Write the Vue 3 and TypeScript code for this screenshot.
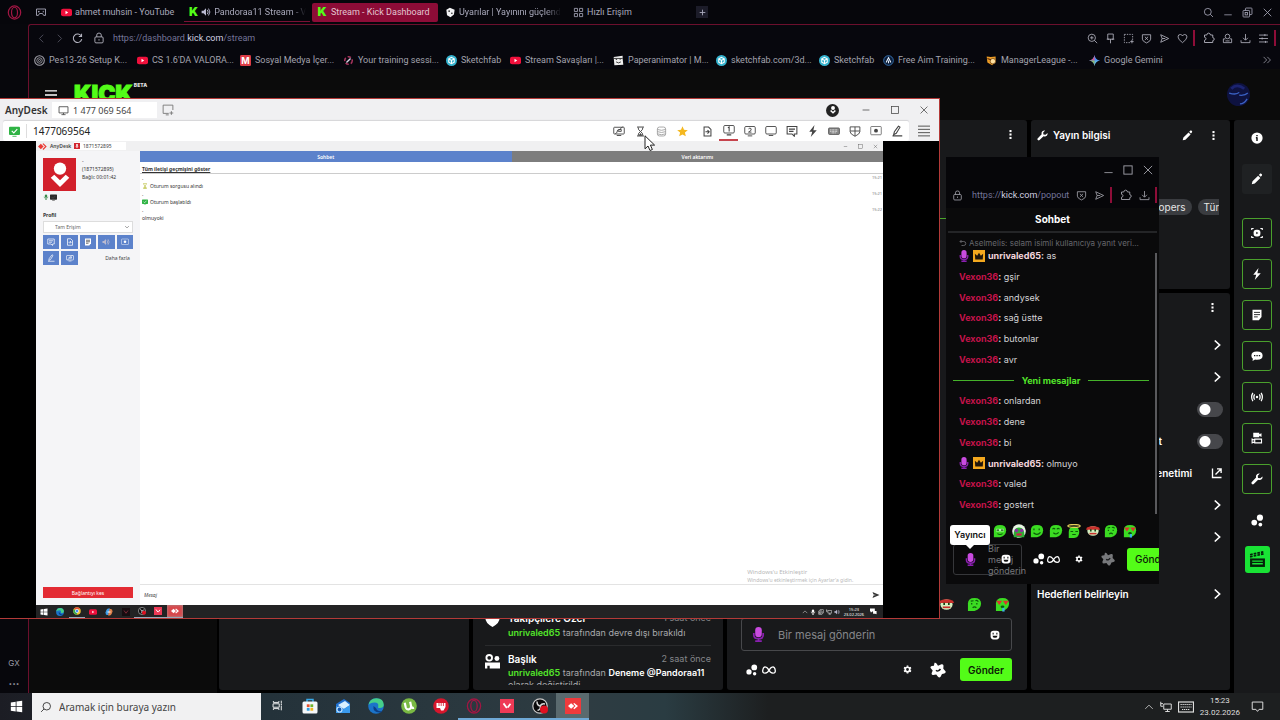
<script setup lang="ts">
import { h } from 'vue'
import type { FunctionalComponent } from 'vue'

const F = 'fill="currentColor" stroke="none"'

const glyphs: Record<string, string> = {
  opera: '<ellipse cx="8" cy="8" rx="6.6" ry="7" stroke-width="1.3"/><ellipse cx="8" cy="8" rx="3.2" ry="5.6" stroke-width="1.3"/>',
  gamepad: '<path d="M2 4h12v8.500h-2.500L10 10H6l-1.500 2.500H2z"/><path d="M5 6.500v2M11 6.500v2M4 7.500h2"/>',
  youtube: '<rect x="0" y="2.500" width="16" height="11" rx="3" fill="#f0103c" stroke="none"/><path d="M6.500 5.500l4 2.500-4 2.500z" fill="#fff" stroke="none"/>',
  speaker: '<path d="M1 6h3l4-4v12l-4-4H1z" fill="#b9b9d0" stroke="none"/><path d="M10 4.500q3 3.500 0 7M12 2.500q4.500 5.500 0 11" stroke="#b9b9d0" stroke-width="1.500"/>',
  dice: '<path d="M2 4l5-3 7 3-1 7-5 4-5-3z" fill="#f2f2f4" stroke="none"/><circle cx="6" cy="6" r="1.100" fill="#111" stroke="none"/><circle cx="10" cy="9" r="1.100" fill="#111" stroke="none"/>',
  grid: '<path d="M2 2h4.500v4.500H2zM9.500 2H14v4.500H9.500zM2 9.500h4.500V14H2zM9.500 9.500H14V14H9.500z"/>',
  plus: '<path d="M8 3v10M3 8h10" stroke-width="1.600"/>',
  search: '<circle cx="7" cy="7" r="5"/><path d="M10.600 10.600L14.500 14.500"/>',
  min: '<path d="M2 12.500h12"/>',
  dash: '<path d="M2.500 8h11"/>',
  restore: '<path d="M5 5V2.500q0-1 1-1h7.500q1 0 1 1V10q0 1-1 1H11"/><rect x="1.500" y="5" width="9.500" height="9.500" rx="1"/><rect x="4.500" y="8" width="3.500" height="3.500"/>',
  max: '<rect x="2.500" y="2.500" width="11" height="11"/>',
  close: '<path d="M2.500 2.500l11 11M13.500 2.500l-11 11"/>',
  back: '<path d="M10.500 2.500L5 8l5.500 5.500"/>',
  fwd: '<path d="M5.500 2.500L11 8l-5.500 5.500"/>',
  chev: '<path d="M5 2l6.500 6L5 14" stroke-width="2.200"/>',
  down: '<path d="M3 5.500L8 10.500l5-5"/>',
  up: '<path d="M2 11L8 5l6 6"/>',
  reload: '<path d="M13.500 4.500A6.200 6.200 0 1 0 14.200 9M13.900 1v4h-4" stroke-width="1.500"/>',
  lock: '<rect x="2.500" y="6.500" width="11" height="8" rx="1.500"/><path d="M5 6.500V4q0-2.600 3-2.600T11 4v2.500M8 9.500v2"/>',
  zoom: '<circle cx="7" cy="7" r="5.300"/><path d="M10.800 10.800l4 4M4.500 7h5M7 4.500v5"/>',
  pin: '<path d="M4 1.500h8v7.500H4zM2.500 9H6M10 9h3.500M8 9v6"/>',
  crop: '<path d="M2 2h12v9M2 2v12h9" stroke-dasharray="2 1.600"/><path d="M13 10v5M10.500 12.500h5"/>',
  shieldx: '<path d="M2 2.500h12V9q0 3-6 5.500Q2 12 2 9z"/><path d="M5.700 5.500l4.600 4.600M10.300 5.500L5.700 10.100"/>',
  send: '<path d="M2.500 2.500L14 8 2.500 13.500 4.500 8zM4.500 8H9"/>',
  heart: '<path d="M8 14Q1.500 9.500 1.500 5.700T5 2.200Q7 2.200 8 4.300 9 2.200 11 2.200q3.500 0 3.500 3.500T8 14z"/>',
  heartf: `<path ${F} d="M8 15Q0 10 .5 5.500 1 1.500 4.700 1.500 7 1.500 8 4q1-2.500 3.300-2.500 3.700 0 4.200 4Q16 10 8 15z"/>`,
  puzzle: '<path d="M2 4h3q.3-2.500 2.500-2.500T10 4h3v3.500q2 .3 2 2t-2 2V14H2v-3q2-.3 2-2T2 7z"/>',
  person: '<circle cx="8" cy="5" r="3.300"/><path d="M5 8.500H2v5.500h12V8.500h-3M5 11.500h6"/>',
  download: '<path d="M8 1.500v8.500M4.500 7L8 10.500 11.500 7M1.500 10.500v3.500h13v-3.500"/>',
  sliders: '<path d="M1.500 3h13M1.500 8h13M1.500 13h13M10 1.500v3M6 6.500v3M11 11.500v3"/>',
  more: '<path d="M2.500 3L7.500 8l-5 5M8.500 3l5 5-5 5"/>',
  target: '<circle cx="8" cy="8" r="7" stroke-width="1.500"/><circle cx="8" cy="8" r="4"/><circle cx="8" cy="8" r="1.500"/>',
  medya: '<rect width="16" height="16" rx="2" fill="#dc3c46" stroke="none"/>',
  aim: '<circle cx="8" cy="8" r="5.500" stroke="#a8345e" stroke-width="2.200" stroke-dasharray="5 3"/><path d="M5 11l6-6" stroke="#d5d5e5" stroke-width="2"/>',
  sketch: '<circle cx="8" cy="8" r="8" fill="#35b3cf" stroke="none"/><path d="M8 3.500l4 2.200v4.600L8 12.500l-4-2.200V5.700zM4 5.700L8 8l4-2.300M8 8v4.500" stroke="#fff" stroke-width="1.500"/>',
  paper: '<path d="M1 3l13-2v4l1 9-13 1z" fill="#efefef" stroke="none"/><path d="M4 6.500h2M9.500 6h2M4.500 10q3.500 3 7 0M1 5h13" stroke="#222"/>',
  freeaim: '<circle cx="8" cy="8" r="7" fill="#0b1c38" stroke="#3e82c8"/><path d="M4.500 11L8 4l3.500 7M8 8v4" stroke="#e6f2ff" stroke-width="1.600"/>',
  league: '<path d="M1 2l6 1 7-1v7l-5 6-7-4z" fill="#eb9b26" stroke="none"/><circle cx="10" cy="9" r="4" fill="#ffe0a0" stroke="#7a4a12"/><path d="M2 5l5 2" stroke="#5a2a08" stroke-width="1.500"/>',
  gemini: '<path d="M8 0q1 7 8 8-7 1-8 8-1-7-8-8 7-1 8-8z" fill="#4b8df8" stroke="none"/><path d="M0 8q7-1 8-8v8z" fill="#d65a8a" stroke="none"/><path d="M8 16q1-7 8-8H8z" fill="#5fb6e0" stroke="none"/><path d="M0 8h8v8Q7 9 0 8z" fill="#8fb66a" stroke="none"/>',
  menu: '<path d="M0 2.500h16M0 8h16M0 13.500h16" stroke-width="1.800"/>',
  burger: '<path d="M0 1.500h16M0 5.800h16M0 10.200h16M0 14.500h16" stroke-width="1.200"/>',
  monitor: '<path d="M1.500 2.500h13v9h-13zM5 14h6M8 11.500V14"/>',
  addmon: '<path d="M9 12.500H1.500v-11h13V8M5 14.500h4M12.500 9.500v5M10 12h5"/>',
  offmon: '<rect x="1" y="3" width="14" height="9" rx="1"/><path d="M5 14h6M3 12L13 2M5 8.500l2-2.500h4v2.500H7"/>',
  hourglass: '<path d="M3 1.500h10M3 14.500h10M4.500 2q0 4 3.500 6 3.500-2 3.500-6M4.500 14q0-4 3.500-6 3.500 2 3.500 6" stroke-width="1.400"/><path fill="currentColor" stroke="none" d="M8 10l3 4H5z"/>',
  db: '<rect x="2" y="1.500" width="12" height="13" rx="3"/><path d="M2 5q6 2.500 12 0M2 8.200q6 2.500 12 0M2 11.400q6 2.500 12 0"/>',
  star: '<path d="M8 .5l2.200 5 5.500.5-4.200 3.600 1.300 5.400L8 12.200 3.200 15l1.300-5.400L.3 6l5.500-.5z" fill="#f5b81f" stroke="none"/>',
  filego: '<path d="M3 1.500h6.500L13 5v9.500H3zM5 8.500h5M8 6l2.500 2.500L8 11" stroke-width="1.500"/>',
  mon1: '<rect x="1" y="2" width="14" height="10" rx="1.500"/><path d="M6.500 5L8.200 4v6M5 14.500h6" stroke-width="1.400"/>',
  mon2: '<rect x="1" y="2" width="14" height="10" rx="1.500"/><path d="M6 5.200Q8 3 9.500 5T6 9.500h4M5 14.500h6"/>',
  mon: '<rect x="1" y="2" width="14" height="10" rx="1.500"/><path d="M5 14h6"/>',
  chat: '<path d="M1.500 2h13v10H11v3l-3-3H1.500zM4 5.500h8M4 8.500h6" stroke-width="1.400"/>',
  bolt: `<path ${F} d="M10 0L3 9h4l-2 7 8-9H8.500z"/>`,
  keyboard: '<rect x="0.800" y="4" width="14.400" height="8.500" rx="1" fill="#8a8a8a" stroke="#555"/><path d="M3 6.500h10M3 8.500h10M5 10.500h6" stroke="#eee" stroke-dasharray="1.200 .8"/>',
  shield: '<path d="M1.500 2.500h13V9q0 3-6.500 6-6.500-3-6.500-6zM8 2.500V15M1.500 8h13"/>',
  record: '<rect x="1" y="2" width="14" height="11" rx="1" stroke-width=".9"/><circle cx="8" cy="7.500" r="2.600" fill="currentColor" stroke="none"/>',
  pen: '<path d="M10 1.500L4.500 9l-1 4 3.500-2L12 3zM2 14.500h13" stroke-width="1.400"/>',
  okbadge: '<rect x="0" y="1" width="16" height="12" rx="1.500" fill="#2fb344" stroke="none"/><path d="M4 7l3 3 5-5.500" stroke="#fff" stroke-width="1.600"/><path d="M5 15h6" stroke="#2fb344"/>',
  anydesk: '<path d="M0 8l5-5 5 5-5 5z" fill="#ea3b36" stroke="none"/><path d="M8 3.500L9.500 2l6 6-6 6L8 12.500 12.500 8z" fill="#ea3b36" stroke="none"/>',
  anydeskw: '<path d="M0 8l5-4.500L10 8l-5 4.500z" fill="#fff" stroke="none"/><path d="M8.500 4.500L10 3l6 5-6 5-1.500-1.500L12 8z" fill="#fff" stroke="none"/>',
  user: '<circle cx="8" cy="5.300" r="2.600" fill="#fff" stroke="none"/><path d="M4.100 9.200l1.500-1.300L8 10.200l2.400-2.300 1.500 1.300L8 13z" fill="#fff" stroke="none"/>',
  mic: `<rect ${F} x="5" y="1" width="6" height="9" rx="3"/><path d="M3 7q0 5 5 5t5-5M8 12v3M5.500 15h5" stroke-width="1.500"/>`,
  micp: '<rect x="4.500" y="0" width="7" height="11" rx="3.500" fill="#c94be0" stroke="none"/><path d="M3 6.500v2q0 4 5 4t5-4v-2" stroke="#8a1fb0" stroke-width="1.800"/><path d="M8 12v3M4.500 15h7" stroke="#8a1fb0" stroke-width="1.800"/>',
  crown: '<rect width="16" height="16" fill="#f3a81e" stroke="none"/><path d="M2.500 5l3 2.500L8 3.500l2.500 4 3-2.500-.5 7.500H3z" fill="#20160a" stroke="none"/>',
  kebab: `<g ${F}><rect x="6.500" y="1.500" width="3" height="3"/><rect x="6.500" y="6.500" width="3" height="3"/><rect x="6.500" y="11.500" width="3" height="3"/></g>`,
  wrench: `<path ${F} d="M15.300 4.500L12.500 7 9.300 6.500 9 3.500 11.800.8Q8 .2 6.800 3.300q-.5 1.500 0 2.700L.8 12.200q-.8 1.400.5 2.500 1.200 1 2.400 0L9.500 9q3 1 5-1 1.300-1.500.8-3.500z"/>`,
  pencil: `<path ${F} d="M1 15l1-4 7.500-7.500 3 3L5 14zM10.500 2.500l1.700-1.700q1-.6 2 .4t.4 2L13 5z"/>`,
  info: `<circle ${F} cx="8" cy="8" r="7.500"/><path d="M8 4v1.500M8 7v5M6.500 7.500H8" stroke="#17181a" stroke-width="2"/>`,
  focus: `<rect ${F} x="3.500" y="3.500" width="9" height="9" rx="3.500"/><path d="M1 4V2h2.500M12.500 2H15v2M1 12v2h2.500M12.500 14H15v-2" stroke-width="1.500"/><path d="M7 6.300L9.800 8 7 9.700z" fill="#17181a" stroke="none"/>`,
  note: `<path ${F} d="M2 1h12v9.500L10.500 15H2z"/><path d="M4 4.500h8M4 7.500h8M4 10.500h5" stroke="#17181a" stroke-width="1.200"/>`,
  bubble: `<path ${F} d="M8 2q7.500 0 7.500 5.500T8 13q-1.500 0-2.500-.3L2 14.500l.5-3Q.5 10 .5 7.500.5 2 8 2z"/><path d="M4 7.500h1.800M7.200 7.500H9M10.400 7.500h1.800" stroke="#17181a" stroke-width="1.800"/>`,
  live: `<circle ${F} cx="8" cy="8" r="1.600"/><path d="M4.800 4.500q-2 3.500 0 7M11.200 4.500q2 3.500 0 7M2.500 2.500Q-.8 8 2.500 13.500M13.500 2.500Q16.800 8 13.500 13.500" stroke-width="1.700"/>`,
  cams: `<path ${F} d="M3 1h8v2l3-1.500v5L11 5v2H3z"/><path d="M5 9.500h9v5H5zM5 11L1.500 9.500v5L5 13" stroke-width="1.500"/>`,
  dots: `<circle ${F} cx="11" cy="4.500" r="3.800"/><circle ${F} cx="4" cy="10.500" r="3.500"/><circle ${F} cx="11.500" cy="13" r="2.300"/>`,
  clapper: `<path ${F} d="M1 7h14v8H1z"/><path d="M1 5.500L14.500 2.500M1 3.500L13.500.8" stroke-width="1.600" stroke-dasharray="2.500 1"/><path d="M3 9.500h10M3 12h10" stroke="#19e335"/>`,
  external: '<path d="M2 2v12h12M6 10l7-7M8 2.500h5.500V8" stroke-width="1.800"/>',
  infinity: '<path d="M8 8Q5.500 4.500 3.500 4.500T.9 8t2.600 3.500T8 8q2.500-3.500 4.500-3.500T15.100 8t-2.600 3.500T8 8z" stroke-width="1.500"/>',
  gear: '<circle cx="8" cy="8" r="4" stroke-width="3"/><path d="M8 .8v2.500M8 12.700v2.500M1.800 4.400L4 5.700M12 10.300l2.200 1.300M1.800 11.600L4 10.300M12 5.700l2.200-1.300" stroke-width="3"/>',
  badge: `<path ${F} stroke-linejoin="round" d="M4.500.8q1.500-.3 2.200 1L8 3.800l3.500-1.500q2-.4 2 1.500l-.2 3 2.200 2.400q.8 1.800-1.200 2.300l-2.300.4-1.400 2.900q-1.300 1.400-2.600 0L6.200 12.500l-3 .6q-2-.1-1.500-2.200l1-2.500L.6 6Q0 4.200 1.900 4l2-.2z"/><path d="M6 8.200q2 2 4.500-1.200" stroke="#17181a" stroke-width="1.500"/>`,
  smile: `<rect ${F} x="1" y="1" width="14" height="14" rx="4.500"/><path d="M5 4.500v2.500M11 4.500v2.500" stroke="#111" stroke-width="1.700"/><path d="M4 9h8q-.5 3.500-4 3.500T4 9z" fill="#111" stroke="none"/>`,
  reply: '<path d="M5 2L2 5l3 3M2 5h7.500q4 0 4 4t-4 4H5" stroke-width="1.800"/>',
  title: `<circle cx="4.500" cy="4" r="3" stroke-width="2"/><circle ${F} cx="12.700" cy="4.800" r="2.600"/><path ${F} d="M0 9h16v6.500H5v-3H2.500v3H0z"/>`,
  e1: '<path d="M1 15V7q0-6 7-6t7 6-7 8z" fill="#3bdc22" stroke="none"/><path d="M3.500 5.500h9v3h-9z" fill="#b9ffad" stroke="none"/><path d="M4 7h3M9 7h3M5 11q3 2 6 0" stroke="#0c5a0a"/>',
  e2: '<circle cx="8" cy="8" r="7.800" fill="#e8f6e4" stroke="none"/><path d="M2 15q-1-11 6-11t6 11z" fill="#2fae35" stroke="none"/><circle cx="5" cy="7.500" r="2" fill="#8a2fa0" stroke="none"/><circle cx="11" cy="7.500" r="2" fill="#8a2fa0" stroke="none"/><path d="M5 12h6" stroke="#d0204a" stroke-width="2.500"/>',
  e3: '<path d="M1 15V7q0-6 7-6t7 6-7 8z" fill="#3bdc22" stroke="none"/><path d="M4.500 5v2M10.500 5v2M4 10q4 4 8-.5" stroke="#0c5a0a" stroke-width="1.400"/>',
  e4: '<path d="M1 15V7q0-6 7-6t7 6-7 8z" fill="#3bdc22" stroke="none"/><path d="M4 6q1.500-2 3 0M9 6q1.500-2 3 0M5 10q3 3 6-.5" stroke="#0c5a0a" stroke-width="1.300"/>',
  e5: '<path d="M2 16V9q0-6 6-6t6 6-6 7z" fill="#3bdc22" stroke="none"/><ellipse cx="8" cy="2.200" rx="7" ry="1.600" stroke="#e5cf5a" stroke-width="1.400"/><path d="M4 8.500h3M9.500 8.500h3M6 12h4" stroke="#0c5a0a"/>',
  e6: '<ellipse cx="8" cy="8" rx="6.500" ry="5.500" fill="#d4efc0" stroke="none"/><path d="M1 4q7-3 14 0l1 2.500-3 0H3L0 6.500z" fill="#c9302c" stroke="none"/><path d="M5.500 6v2.500M10.500 6v2.500" stroke="#0c3a0a" stroke-width="1.700"/><path d="M4 11h8" stroke="#c9302c" stroke-width="1.800"/>',
  e7: '<path d="M1 15V7q0-6 7-6t7 6-7 8z" fill="#3bdc22" stroke="none"/><path d="M4 4.500l3-.5M9 4q2-1 3 1M5 6.500v1.500M10.500 6.500v1.500M6 11.500q2-2 4 0" stroke="#0c5a0a" stroke-width="1.300"/>',
  e8: '<path d="M1 15V7q0-6 7-6t7 6-7 8z" fill="#3bdc22" stroke="none"/><path d="M2.500 4.500h4L4.500 7.500zM9.500 4.500h4L11.500 7.500z" fill="#e03131" stroke="#e03131"/><ellipse cx="8" cy="10.500" rx="2" ry="1.500" fill="#0c5a0a" stroke="none"/><path d="M9 11.500v4" stroke="#39b5e8" stroke-width="2.500"/>',
  avatar: '<circle cx="8" cy="8" r="8" fill="#0e1240" stroke="none"/><path d="M1.500 7q5 1.500 7-.5M8.500 8.500q4 .5 6-1.500M9 14.500q3 0 5-3.500" stroke="#3a61c4" stroke-width=".9"/><path d="M3 4q4-4 9 0" stroke="#1c2470" stroke-width="2"/>',
  windows: `<path ${F} d="M1 3l6-1v5.600H1zM8 1.900L15 1v6.600H8zM1 8.600h6v5.600l-6-1zM8 8.600h7V15l-7-.9z"/>`,
  taskview: '<path d="M2 1.500v2h8v-2M2 14.500v-2h8v2M1.500 5.500h9v5h-9zM13.500 1v3.500M13.500 8v7" stroke-width="1.300"/><rect x="12.700" y="5.200" width="1.800" height="1.800" fill="currentColor" stroke="none"/>',
  store: '<path d="M5 4V1.500h6V4" stroke="#38a9e8" stroke-width="1.500"/><rect x="0.500" y="3.500" width="15" height="12" rx="1.500" fill="#f5f7f9" stroke="none"/><path d="M4.800 6.300h2.800v2.800H4.800z" fill="#e8502c" stroke="none"/><path d="M8.400 6.300h2.800v2.800H8.400z" fill="#6fb52d" stroke="none"/><path d="M4.800 9.900h2.800v2.800H4.800z" fill="#2f9de0" stroke="none"/><path d="M8.400 9.900h2.800v2.800H8.400z" fill="#f3b61f" stroke="none"/>',
  mail: '<path d="M1 6l8-5 6 4v9H1z" fill="#1f6fd0" stroke="none"/><path d="M3 7l7-4 5 4-6 4z" fill="#d8efff" stroke="none"/><path d="M1 8l7 3.500L15 7v8H1z" fill="#3a9bee" stroke="none"/><circle cx="4.500" cy="11.500" r="2.500" fill="#1459b0" stroke="#bfe2ff"/>',
  edge: '<circle cx="8" cy="8" r="7.800" fill="#1b74c9" stroke="none"/><path d="M.5 7Q1.500.2 8.500.2q7.300.3 7.300 6.800-.5 3.500-5 3-1.300-.5-.6-1.500Q11 4.500 6.500 4.500 2 4.800.5 7z" fill="#46cf8a" stroke="none"/><path d="M5.500 8q-1 6 6 6.500 2 0 3-1.500-5 1-6.500-3z" fill="#0c3f86" stroke="none"/>',
  utorrent: '<circle cx="8" cy="8" r="7.800" fill="#79b943" stroke="none"/><path d="M4.500 4v4.500q.3 3 3 2.700 2.500-.2 2.500-3V4M10 8q.3 3 2.500 2.700" stroke="#fff" stroke-width="2.200" transform="rotate(-12 8 8)"/>',
  fist: '<circle cx="8" cy="8" r="7.800" fill="#d6162c" stroke="none"/><path d="M3.500 5h9v4l-2 3.500H8L7 10H3.500z" fill="#fff" stroke="none"/><path d="M6 5v3M8.200 5v3M10.400 5v3" stroke="#d6162c" stroke-width=".8"/>',
  valorant: '<rect width="16" height="16" fill="#ee3a56" stroke="none"/><path d="M4 5l3.800 5.200M12 5.500L8.800 9.800" stroke="#fff" stroke-width="2"/>',
  valdark: '<rect width="16" height="16" fill="#170d10" stroke="none"/><path d="M4 5l4 5.500L12 5" stroke="#8f2f3e" stroke-width="1.600"/>',
  obs: '<circle cx="8" cy="8" r="7.200" fill="#0a0a0b" stroke="#c9c9c9" stroke-width="1.200"/><path d="M5 3.500q0 4.500 4 4.500M13 6q-4-1-5 3M5.500 12.500q4-1 2.500-5" stroke="#d8d8d8" stroke-width="1.500"/><circle cx="12" cy="11.500" r="4" fill="#e01020" stroke="none"/>',
  chrome: '<circle cx="8" cy="8" r="7.500" fill="#f2c230" stroke="none"/><path d="M1.500 4.500A7.500 7.500 0 0 1 14.500 4.500H8z" fill="#e24a3b" stroke="none"/><path d="M1.500 4.500A7.500 7.500 0 0 0 7.500 15.500L9 9z" fill="#36a852" stroke="none"/><circle cx="8" cy="8" r="3.300" fill="#4a8af4" stroke="#fff" stroke-width="1.200"/>',
  copilot: '<path d="M1 9q2-8 6-8h3L7 14H4q-3 0-3-5z" fill="#3c9ce8" stroke="none"/><path d="M15 7q-2 8-6 8H6L9 2h3q3 0 3 5z" fill="#e0824c" stroke="none"/><path d="M5 8h6" stroke="#fff" stroke-width="2"/>',
  network: '<path d="M5 4h10v7H5zM10 11v3M7 14h6M1 1v6h3M1 3.500h3" stroke-width="1.300"/>',
  keys: '<rect x="0.500" y="3" width="15" height="10"/><path d="M2.500 5.500h11M2.500 8h11M4 10.500h8" stroke-dasharray="1.300 .7"/>',
  notice: '<path d="M1.500 2.500h13v9H10L8 14l-2-2.500H1.500z"/>',
  notef: `<path ${F} d="M0 1h11v7H5l-3 3V8H0zM7 7h8v7l-3-1H7z"/>`,
  plane: `<path ${F} d="M1 2l14 6-14 6 2-5 5-1-5-1z"/>`,
  cursor: '<path d="M2 .8v13l3-2.800 2 4.500 2.400-1-2-4.400h4.200z" fill="#fff" stroke="#222" stroke-width="1"/>',
}

const Ico: FunctionalComponent<{ n: string; s?: number }> = (p) =>
  h('svg', {
    viewBox: '0 0 16 16',
    width: p.s ?? 12,
    height: p.s ?? 12,
    fill: 'none',
    stroke: 'currentColor',
    'stroke-width': 1.2,
    'aria-hidden': 'true',
    innerHTML: glyphs[p.n],
  })

const tabs = [
  { icon: 'youtube', label: 'ahmet muhsin - YouTube' },
  { icon: 'kick', label: 'Pandoraa11 Stream - V', audio: true },
  { icon: 'kick', label: 'Stream - Kick Dashboard', active: true },
  { icon: 'dice', label: 'Uyarılar | Yayınını güçlend', fade: true },
  { icon: 'grid', label: 'Hızlı Erişim' },
]
const bookmarks = [
  { icon: 'target', label: 'Pes13-26 Setup K...' },
  { icon: 'youtube', label: "CS 1.6'DA VALORA..." },
  { icon: 'medya', label: 'Sosyal Medya İçer...' },
  { icon: 'aim', label: 'Your training sessi...' },
  { icon: 'sketch', label: 'Sketchfab', short: true },
  { icon: 'youtube', label: 'Stream Savaşları |...' },
  { icon: 'paper', label: 'Paperanimator | M...' },
  { icon: 'sketch', label: 'sketchfab.com/3d...' },
  { icon: 'sketch', label: 'Sketchfab', short: true },
  { icon: 'freeaim', label: 'Free Aim Training...' },
  { icon: 'league', label: 'ManagerLeague -...' },
  { icon: 'gemini', label: 'Google Gemini' },
]
const pageTools = ['zoom', 'pin', 'crop', 'shieldx', 'send', 'heart']
const railTools = ['focus', 'bolt', 'note', 'bubble', 'live', 'cams', 'wrench']
const sessionTools = ['mon1', 'mon2', 'mon', 'chat', 'bolt', 'keyboard', 'shield', 'record', 'pen']
const emotes = ['e1', 'e2', 'e3', 'e4', 'e5', 'e6', 'e7', 'e8']
const remoteButtons = ['chat', 'filego', 'note', 'speaker', 'record', 'pen', 'offmon']
const remoteApps = [
  { icon: 'windows' }, { icon: 'edge' }, { icon: 'chrome', run: true }, { icon: 'youtube' }, { icon: 'copilot' },
  { icon: 'valdark' }, { icon: 'obs', run: true }, { icon: 'valorant', run: true }, { icon: 'anydeskw', run: true, active: true },
]
const apps = [
  { icon: 'taskview', size: 11 }, { icon: 'store', size: 16 }, { icon: 'mail', size: 16 }, { icon: 'edge', size: 16 },
  { icon: 'utorrent', size: 16 }, { icon: 'fist', size: 16 }, { icon: 'opera', size: 16, run: true },
  { icon: 'valorant', size: 14, run: true }, { icon: 'obs', size: 16, run: true }, { icon: 'anydeskw', size: 10, run: true, active: true },
]
interface Msg { user?: string; text: string; mod?: boolean }
const messages: Msg[] = [
  { user: 'unrivaled65', text: 'as', mod: true },
  { user: 'Vexon36', text: 'gşir' },
  { user: 'Vexon36', text: 'andysek' },
  { user: 'Vexon36', text: 'sağ üstte' },
  { user: 'Vexon36', text: 'butonlar' },
  { user: 'Vexon36', text: 'avr' },
  { text: 'Yeni mesajlar' },
  { user: 'Vexon36', text: 'onlardan' },
  { user: 'Vexon36', text: 'dene' },
  { user: 'Vexon36', text: 'bi' },
  { user: 'unrivaled65', text: 'olmuyo', mod: true },
  { user: 'Vexon36', text: 'valed' },
  { user: 'Vexon36', text: 'gostert' },
]
const actions = [
  { kind: 'chev' }, { kind: 'chev' }, { kind: 'toggle' }, { kind: 'toggle', label: 't' },
  { kind: 'external', label: 'Denetimi' }, { kind: 'chev' }, { kind: 'chev' },
]
const history = [
  { time: '15:21', icon: 'hourglass', text: 'Oturum sorgusu alındı' },
  { time: '15:21', icon: 'okbadge', text: 'Oturum başlatıldı' },
  { time: '15:22', icon: '', text: 'olmuyoki' },
]
</script>

<template>
  <div class="desktop">
    <div class="browser">
      <header class="tabbar">
        <Ico n="opera" :s="15" class="opera" />
        <Ico n="gamepad" :s="12" class="pad" />
        <nav class="tabs">
          <button v-for="t in tabs" :key="t.label" class="tab" :class="{ active: t.active, playing: t.audio, fade: t.fade || t.audio }">
            <b v-if="t.icon === 'kick'" class="kmark">K</b>
            <Ico v-else :n="t.icon" :s="11" />
            <Ico v-if="t.audio" n="speaker" :s="10" />
            <span>{{ t.label }}</span>
          </button>
        </nav>
        <button class="newtab" aria-label="Yeni sekme"><Ico n="plus" :s="9" /></button>
        <div class="winbtns">
          <button aria-label="Ara"><Ico n="search" :s="11" /></button>
          <button aria-label="Küçült"><Ico n="min" :s="10" /></button>
          <button aria-label="Geri yükle"><Ico n="restore" :s="11" /></button>
          <button aria-label="Kapat"><Ico n="close" :s="11" /></button>
        </div>
      </header>
      <div class="shell">
        <aside class="side"><span>GX</span><b>...</b></aside>
        <div class="view">
          <div class="address">
            <button class="dim" aria-label="Geri"><Ico n="back" :s="11" /></button>
            <button class="dim" aria-label="İleri"><Ico n="fwd" :s="11" /></button>
            <button aria-label="Yenile"><Ico n="reload" :s="11" /></button>
            <Ico n="lock" :s="12" class="lock" />
            <a href="#" class="url">https://dashboard.<em>kick.com</em>/stream</a>
            <div class="tools">
              <button v-for="i in pageTools" :key="i" :aria-label="i"><Ico :n="i" :s="11" /></button>
            </div>
            <i class="bar"></i>
            <div class="tools ext">
              <button aria-label="Eklentiler"><Ico n="puzzle" :s="12" /></button>
              <button aria-label="Profil"><Ico n="person" :s="11" /></button>
              <button aria-label="İndirilenler"><Ico n="download" :s="11" /></button>
              <button aria-label="Ayarlar"><Ico n="sliders" :s="11" /></button>
            </div>
            <i class="bar"></i>
          </div>
          <nav class="bookmarks">
            <a v-for="(b, i) in bookmarks" :key="i" href="#" :class="{ short: b.short }">
              <span class="fav"><Ico :n="b.icon" :s="11" /><b v-if="b.icon === 'medya'">M</b></span>{{ b.label }}
            </a>
            <button aria-label="Diğer yer imleri"><Ico n="more" :s="10" /></button>
          </nav>
          <main class="page">
            <div class="top">
              <button aria-label="Menü"><Ico n="menu" :s="12" /></button>
              <div class="logo">KICK<sup>BETA</sup></div>
              <Ico n="avatar" :s="23" class="avatar" />
            </div>
            <div class="board">
              <section class="void"></section>
              <section class="panel"></section>
              <section class="panel activity">
                <article>
                  <Ico n="heartf" :s="15" />
                  <div>
                    <h3>Takipçilere Özel<time>1 saat önce</time></h3>
                    <p><b>unrivaled65</b> tarafından devre dışı bırakıldı</p>
                  </div>
                </article>
                <article>
                  <Ico n="title" :s="15" />
                  <div>
                    <h3>Başlık<time>2 saat önce</time></h3>
                    <p class="cut"><b>unrivaled65</b> tarafından <strong>Deneme @Pandoraa11</strong> olarak değiştirildi</p>
                  </div>
                </article>
              </section>
              <section class="panel chat">
                <button class="keb" aria-label="Seçenekler"><Ico n="kebab" :s="11" /></button>
                <hr />
                <div class="emotes"><Ico n="e6" :s="15" /><Ico n="e7" :s="15" /><Ico n="e8" :s="15" /></div>
                <div class="field">
                  <Ico n="micp" :s="15" />
                  <input type="text" aria-label="Mesaj" placeholder="Bir mesaj gönderin" />
                  <button aria-label="İfadeler"><Ico n="smile" :s="10" /></button>
                </div>
                <div class="row">
                  <Ico n="dots" :s="12" /><Ico n="infinity" :s="14" />
                  <button class="push" aria-label="Ayarlar"><Ico n="gear" :s="9" /></button>
                  <button class="bdg" aria-label="Rozet"><Ico n="badge" :s="16" /></button>
                  <button class="go">Gönder</button>
                </div>
              </section>
              <div class="stack">
                <section class="panel info">
                  <h2><Ico n="wrench" :s="11" />Yayın bilgisi
                    <button aria-label="Düzenle"><Ico n="pencil" :s="11" /></button>
                    <button aria-label="Seçenekler"><Ico n="kebab" :s="11" /></button>
                  </h2>
                  <div class="chips"><span>Developers</span><span>Türkçe</span></div>
                </section>
                <section class="panel acts">
                  <button class="keb" aria-label="Seçenekler"><Ico n="kebab" :s="11" /></button>
                  <div v-for="(a, i) in actions" :key="i" class="act" :class="a.kind">
                    <label :for="'act' + i">{{ a.label }}</label>
                    <input v-if="a.kind === 'toggle'" :id="'act' + i" type="checkbox" role="switch" />
                    <button v-else :id="'act' + i" :aria-label="a.label ?? 'Aç'"><Ico :n="a.kind" :s="12" /></button>
                  </div>
                  <div class="act goal"><label for="goal">Hedefleri belirleyin</label><button id="goal"><Ico n="chev" :s="12" /></button></div>
                </section>
              </div>
              <aside class="rail">
                <button aria-label="Bilgi"><Ico n="info" :s="12" /></button>
                <button class="tile" aria-label="Düzenle"><Ico n="pencil" :s="12" /></button>
                <button v-for="r in railTools" :key="r" class="box" :aria-label="r"><Ico :n="r" :s="12" /></button>
                <button aria-label="Puanlar"><Ico n="dots" :s="13" /></button>
                <button class="clip" aria-label="Klip"><Ico n="clapper" :s="17" /></button>
              </aside>
            </div>
          </main>
        </div>
      </div>
    </div>

    <section class="anydesk">
      <header class="atitle">
        <strong>AnyDesk</strong>
        <div class="atab"><Ico n="monitor" :s="11" />1 477 069 564</div>
        <Ico n="addmon" :s="12" class="addmon" />
        <span class="status"><Ico n="user" :s="12" /></span>
        <button aria-label="Küçült"><Ico n="dash" :s="10" /></button>
        <button aria-label="Büyüt"><Ico n="max" :s="10" /></button>
        <button aria-label="Kapat"><Ico n="close" :s="10" /></button>
      </header>
      <div class="abar">
        <div class="abox">
          <Ico n="okbadge" :s="11" />
          <input type="text" value="1477069564" aria-label="Uzak adres" />
          <div class="atools">
            <button aria-label="Gizlilik"><Ico n="offmon" :s="12" /></button>
            <button aria-label="Bekleme"><Ico n="hourglass" :s="11" /></button>
            <button class="pale" aria-label="Veri"><Ico n="db" :s="11" /></button>
            <button aria-label="Sık kullanılan"><Ico n="star" :s="11" /></button>
          </div>
          <div class="atools second">
            <button aria-label="Dosya aktarımı"><Ico n="filego" :s="11" /></button>
            <button v-for="(s, i) in sessionTools" :key="s" :class="{ on: i === 0 }" :aria-label="s"><Ico :n="s" :s="12" /></button>
          </div>
        </div>
        <button class="aburger" aria-label="Menü"><Ico n="burger" :s="12" /></button>
      </div>
      <div class="remote">
        <div class="screen">
          <div class="rtitle">
            <Ico n="anydesk" :s="9" /><strong>AnyDesk</strong>
            <span class="rtab"><i><Ico n="user" :s="6" /></i>1871572895</span>
            <Ico n="dash" :s="5" class="rpush" /><Ico n="max" :s="5" /><Ico n="close" :s="5" />
          </div>
          <div class="rbody">
            <aside class="rside">
              <div class="peer">
                <div class="pic"><Ico n="user" :s="38" /></div>
                <div class="ptext"><span>-</span><span>(1871572895)</span><span>Bağlı: 00:01:42</span></div>
              </div>
              <div class="perm"><Ico n="mic" :s="6" /><Ico n="okbadge" :s="7" class="blk" /></div>
              <label for="profil">Profil</label>
              <div class="pick"><select id="profil"><option>Tam Erişim</option></select><Ico n="down" :s="6" /></div>
              <div class="rbtns">
                <button v-for="b in remoteButtons" :key="b" :aria-label="b"><Ico :n="b" :s="8" /></button>
                <span>Daha fazla</span>
              </div>
              <button class="cutoff">Bağlantıyı kes</button>
            </aside>
            <div class="rmain">
              <div class="rtabs"><button>Sohbet</button><button>Veri aktarımı</button></div>
              <a href="#" class="all">Tüm iletişi geçmişini göster</a>
              <div class="log">
                <div v-for="(r, i) in history" :key="i">
                  <p><span>.</span><time>{{ r.time }}</time></p>
                  <p><Ico v-if="r.icon" :n="r.icon" :s="6" :class="'h' + i" />{{ r.text }}</p>
                </div>
              </div>
              <div class="mark"><b>Windows'u Etkinleştir</b><span>Windows'u etkinleştirmek için Ayarlar'a gidin.</span></div>
              <div class="compose"><input type="text" placeholder="Mesaj" aria-label="Uzak mesaj" /><button aria-label="Yolla"><Ico n="plane" :s="8" /></button></div>
            </div>
          </div>
          <div class="rtask">
            <div class="rapps">
              <span v-for="a in remoteApps" :key="a.icon" :class="{ run: a.run, active: a.active }"><Ico :n="a.icon" :s="8" /></span>
            </div>
            <div class="rtray">
              <Ico n="up" :s="6" /><Ico n="mic" :s="6" /><Ico n="restore" :s="6" /><Ico n="network" :s="6" /><Ico n="speaker" :s="6" />
              <time>15:23<br />23.02.2026</time><Ico n="notef" :s="7" />
            </div>
          </div>
        </div>
      </div>
      <Ico n="cursor" :s="16" class="cursor" />
    </section>

    <section class="popup">
      <div class="pwin">
        <button aria-label="Küçült"><Ico n="min" :s="11" /></button>
        <button aria-label="Büyüt"><Ico n="max" :s="12" /></button>
        <button aria-label="Kapat"><Ico n="close" :s="12" /></button>
      </div>
      <div class="paddr">
        <Ico n="lock" :s="11" />
        <a href="#" class="url">https://<em>kick.com</em>/popout</a>
        <Ico n="shieldx" :s="11" /><Ico n="send" :s="11" /><i class="bar"></i><Ico n="puzzle" :s="12" /><Ico n="download" :s="11" /><i class="bar"></i>
      </div>
      <h2>Sohbet</h2>
      <div class="feed">
        <p class="reply"><Ico n="reply" :s="8" />Aselmelis: selam isimli kullanıcıya yanıt veri...</p>
        <div class="list">
          <p v-for="(m, i) in messages" :key="i" :class="{ mod: m.mod, sep: !m.user }">
            <template v-if="m.mod"><Ico n="micp" :s="12" /><Ico n="crown" :s="12" /></template>
            <template v-if="m.user"><b>{{ m.user }}</b><i>:</i>&nbsp;{{ m.text }}</template>
            <span v-else>{{ m.text }}</span>
          </p>
        </div>
      </div>
      <div class="pem"><Ico v-for="e in emotes" :key="e" :n="e" :s="14" /></div>
      <div class="pfoot">
        <div class="pfield">
          <Ico n="micp" :s="13" />
          <label for="pmsg">Bir mesaj gönderin</label><input id="pmsg" type="text" />
          <Ico n="smile" :s="10" class="psm" />
        </div>
        <Ico n="dots" :s="12" class="pd" /><Ico n="infinity" :s="13" />
        <Ico n="gear" :s="8" class="pg" />
        <Ico n="badge" :s="14" class="pb" />
        <button class="go">Gönder</button>
      </div>
      <div class="tip" role="tooltip">Yayıncı</div>
    </section>

    <footer class="taskbar">
      <button class="start" aria-label="Başlat"><Ico n="windows" :s="13" /></button>
      <label class="find"><Ico n="search" :s="12" /><input type="text" placeholder="Aramak için buraya yazın" /></label>
      <div class="apps">
        <button v-for="a in apps" :key="a.icon" :class="[a.icon, { run: a.run, active: a.active }]" :aria-label="a.icon"><span><Ico :n="a.icon" :s="a.size" /></span></button>
      </div>
      <div class="tray">
        <Ico n="up" :s="10" /><Ico n="network" :s="12" /><Ico n="keys" :s="16" />
        <time>15:23<br />23.02.2026</time>
        <Ico n="notice" :s="13" />
      </div>
    </footer>
  </div>
</template>

<style>
body { margin: 0; background: #000; }
</style>
<style scoped>
* { box-sizing: border-box; margin: 0; }
svg { display: block; flex: none; }
button { background: none; border: 0; padding: 0; color: inherit; font: inherit; display: flex; align-items: center; justify-content: center; flex: none; }
input, select { font: inherit; color: inherit; background: none; border: 0; padding: 0; min-width: 0; outline: 0; }
a { color: inherit; text-decoration: none; }
em, i { font-style: normal; }
.desktop { position: relative; min-height: 100vh; display: flex; flex-direction: column; overflow: hidden; font-family: Inter, "Noto Sans", sans-serif; font-size: 9px; color: #fff; background: #000; }
.browser { flex: 1; display: flex; flex-direction: column; background: #06060b; }

.tabbar { height: 24px; display: flex; align-items: center; color: #a9a9bb; padding: 0 7px; font-family: Roboto, sans-serif; }
.opera { color: #a01643; }
.pad { margin: 0 9px 0 13px; }
.tabs { display: flex; gap: 2px; }
.tab { width: 126px; height: 19px; justify-content: flex-start; gap: 3px; padding: 0 5px; border-radius: 2px; white-space: nowrap; }
.tab.fade span { mask-image: linear-gradient(90deg, #000 85%, transparent); }
.tab.active { background: #8d0c37; color: #e3c6d1; gap: 4px; }
.tab.playing { border-bottom: 1px solid #7b1035; border-radius: 0; }
.kmark { width: 10px; color: #53fc18; font: 900 12px/12px Inter, sans-serif; }
.newtab { width: 12px; height: 12px; background: #1c1c29; margin-left: 2px; }
.winbtns { margin-left: auto; display: flex; gap: 9px; }
.shell { flex: 1; display: flex; }
.side { width: 28px; display: flex; flex-direction: column; align-items: center; justify-content: flex-end; gap: 8px; padding-bottom: 6px; color: #9a9aa6; font-size: 8px; background: #07070c; }
.side b { font-size: 11px; line-height: 11px; }
.view { flex: 1; min-width: 0; display: flex; flex-direction: column; border: solid #6b0f2d; border-width: 1px 0 0 1px; border-top-left-radius: 3px; background: #07070d; }
.address { height: 26px; display: flex; align-items: center; color: #b4b4c0; padding: 0 4px 0 7px; }
.address > button { margin-right: 7px; }
.address .dim { color: #555563; }
.lock { margin: 0 8px 0 3px; }
.url { color: #75759a; font: 9px Roboto, sans-serif; }
.url em { color: #d0d0e0; }
.address .url { flex: 1; }
.tools { display: flex; gap: 7px; padding-right: 5px; }
.tools.ext { padding: 0 5px 0 8px; }
.bar { width: 2px; height: 16px; background: #8e0d38; }
.bookmarks { height: 18px; display: flex; align-items: center; font-family: Roboto, sans-serif; color: #a3a3ad; padding: 0 8px 0 5px; }
.bookmarks a { flex: 0 1 103px; display: flex; align-items: center; gap: 4px; white-space: nowrap; }
.bookmarks a.short { flex-basis: 64px; }
.bookmarks button { margin-left: auto; }
.fav { position: relative; display: flex; }
.fav b { position: absolute; inset: 0; text-align: center; font: 700 9px/11px Inter, sans-serif; color: #fff; }

.page { flex: 1; display: flex; flex-direction: column; background: #0b0b0b; }
.top { height: 51px; padding: 0 30px 0 16px; display: flex; align-items: center; gap: 17px; overflow: hidden; }
.logo { color: #53fc18; font: 900 23px/26px Inter, sans-serif; display: flex; -webkit-text-stroke: 1px #53fc18; margin-bottom: 2px; }
.logo sup { color: #ddd; font-size: 5px; line-height: 9px; margin-left: 1px; -webkit-text-stroke: 0; }
.avatar { margin-left: auto; }
.board { flex: 1; display: flex; gap: 4px; background: #000; min-height: 0; }
.void { flex: 1; background: #0b0b0b; margin-right: -2px; }
.panel { width: 250px; background: #18191b; border-radius: 3px; margin-bottom: 3px; }
.activity { display: flex; flex-direction: column; justify-content: flex-end; padding: 0 12px 5px; }
.activity article { display: flex; gap: 8px; padding: 5px 0; }
.activity article > svg { margin-top: 3px; }
.activity article + article { border-top: 1px solid #2a2b2d; padding-bottom: 0; }
.activity article > div { flex: 1; }
.activity h3 { font-size: 10px; line-height: 16px; font-weight: 600; display: flex; justify-content: space-between; }
.activity time { font-weight: 400; font-size: 9px; color: #85868a; }
.activity p { line-height: 14px; color: #a8a9ac; }
.activity p b { color: #53e52a; font-weight: 600; }
.activity strong { color: #fff; font-weight: 600; }
.activity .cut { height: 18px; overflow: hidden; line-height: 12px; }
.chat { width: 300px; display: flex; flex-direction: column; padding: 0 15px 9px 14px; }
.keb { align-self: flex-end; width: 11px; height: 29px; margin-right: -4px; }
.chat hr { border: 0; height: 1px; background: #4aa52b; margin: 69px 0 0; }
.emotes { margin-top: auto; display: flex; justify-content: flex-end; gap: 13px; padding: 0 2px 6px; }
.field { height: 33px; border: 1px solid #47484b; border-radius: 3px; display: flex; align-items: center; padding: 0 11px 0 9px; gap: 12px; color: #fff; }
.field input { flex: 1; font-size: 11px; }
.field input::placeholder { color: #85868a; opacity: 1; }
.row { display: flex; align-items: center; gap: 4px; height: 23px; margin-top: 7px; padding-left: 5px; }
.push { margin-left: auto; margin-right: 14px; }
.bdg { margin-right: 10px; }
.go { background: #53fc18; color: #0b1a06; font-weight: 600; font-size: 10px; width: 52px; height: 23px; border-radius: 3px; }
.stack { width: 199px; display: flex; flex-direction: column; gap: 1px; }
.stack .panel { width: auto; }
.info { height: 169px; padding: 7px 11px 0 6px; overflow: hidden; }
.info h2 { font-size: 10px; font-weight: 600; display: flex; align-items: center; gap: 5px; height: 16px; white-space: nowrap; }
.info h2 button:first-of-type { margin-left: auto; margin-right: 10px; }
.chips { margin-top: 56px; display: flex; gap: 6px; overflow: hidden; padding-left: 89px; font-size: 10px; }
.chips span { background: #3a3c40; border-radius: 8px; height: 16px; line-height: 16px; padding: 0 6px; color: #e6e6e6; }
.acts { flex: 1; padding: 0 7px 0 6px; display: flex; flex-direction: column; }
.acts .keb { margin-right: 5px; }
.act { display: flex; align-items: center; height: 32px; font-size: 10px; font-weight: 600; }
.keb + .act { margin-top: 7px; }
.act label { flex: 1; }
.act.external label { text-align: right; padding-right: 19px; }
.act.toggle label { text-align: right; padding-right: 35px; }
.act.goal { margin-top: 25px; }
.act input { appearance: none; width: 26px; height: 15px; border-radius: 8px; background: radial-gradient(circle at 8px 50%, #fff 5px, #46474b 6px); }
.rail { width: 46px; background: #18191b; display: flex; flex-direction: column; align-items: center; gap: 11px; padding-top: 3px; border-top-left-radius: 3px; }
.rail button { width: 30px; height: 30px; border-radius: 3px; }
.rail .tile { background: #1f2123; margin-bottom: 13px; }
.rail .box { border: 1px solid #4aa02c; }
.rail .clip { width: 25px; height: 27px; background: #19e335; color: #05210a; }

.anydesk { position: absolute; left: 0; top: 98px; bottom: 101px; width: 73.45%; background: #f0f0f2; border: solid #b33a38; border-width: 1px 1px 1px 0; color: #333; display: flex; flex-direction: column; font-family: "Noto Sans", sans-serif; }
.atitle { height: 22px; display: flex; align-items: center; padding: 0 10px 0 5px; font-size: 10px; color: #444; }
.atitle strong { font-size: 10px; font-weight: 600; color: #333; width: 47px; }
.atab { width: 105px; height: 16px; background: #fff; display: flex; align-items: center; gap: 4px; padding-left: 6px; white-space: nowrap; font-size: 9px; }
.addmon { margin-left: 5px; color: #777; }
.status { margin-left: auto; width: 13px; height: 13px; border-radius: 50%; background: #222; display: flex; align-items: center; justify-content: center; margin-right: 2px; }
.atitle button { margin-left: 19px; }
.status + button { margin-left: 20px; }
.abar { height: 20px; display: flex; align-items: center; padding-left: 3px; }
.abox { flex: 1; height: 20px; background: #fff; border-radius: 2px; display: flex; align-items: center; padding: 0 3px 0 6px; box-shadow: 0 -1px 1px #d5d5d8; }
.abox > input { flex: 1; border-left: 1px solid #ddd; margin-left: 6px; padding-left: 6px; font-size: 10px; line-height: 14px; color: #222; }
.atools { display: flex; gap: 1px; color: #444; }
.atools button { width: 20px; height: 20px; }
.atools .pale { color: #999; }
.atools.second { margin-left: 6px; gap: 2px; }
.atools.second button { width: 19px; }
.atools .on { border-bottom: 2px solid #c6444d; }
.aburger { width: 30px; color: #444; }
.remote { flex: 1; min-height: 0; display: flex; background: #000; padding: 0 56px 0 36px; }
.screen { flex: 1; min-width: 0; display: flex; flex-direction: column; background: #fff; font-size: 5px; line-height: 6px; }
.rtitle { height: 10px; background: #f0f0f1; display: flex; align-items: center; gap: 3px; padding: 0 5px 0 2px; color: #444; }
.rtitle strong { font-weight: 600; width: 21px; }
.rtab { background: #fff; width: 52px; height: 8px; display: flex; align-items: center; gap: 3px; }
.rtab i { background: #d22630; }
.rpush { margin-left: auto; }
.rtitle > svg:nth-last-child(-n+2) { margin-left: 7px; }
.rbody { flex: 1; display: flex; min-height: 0; }
.rside { width: 104px; background: #f5f5f7; padding: 7px 7px; display: flex; flex-direction: column; }
.peer { display: flex; gap: 6px; }
.pic { width: 33px; height: 33px; background: #d2202b; display: flex; align-items: center; justify-content: center; overflow: hidden; }
.ptext { display: flex; flex-direction: column; gap: 2px; }
.perm { display: flex; gap: 1px; margin-top: 3px; color: #3a8a4a; }
.blk { filter: grayscale(1) brightness(0.3); }
.rside label { margin-top: 11px; font-weight: 700; color: #333; }
.pick { position: relative; display: flex; margin-top: 3px; }
.pick svg { position: absolute; right: 3px; top: 3px; }
.pick select { appearance: none; flex: 1; height: 12px; border: 1px solid #ddd; background: #fff; padding-left: 11px; color: #666; }
.rbtns { display: grid; grid-template-columns: repeat(5, 1fr); gap: 2px; margin-top: 2px; color: #fff; }
.rbtns button { height: 14px; background: #5c82cb; }
.rbtns span { grid-column: 4 / 6; align-self: center; padding-left: 7px; color: #444; white-space: nowrap; }
.cutoff { margin-top: auto; height: 11px; background: #e32b33; color: #fff; font-size: 5px; }
.rmain { flex: 1; display: flex; flex-direction: column; }
.rtabs { display: flex; height: 11px; color: #fff; }
.rtabs button { flex: 1; background: #5c82cb; font-weight: 600; }
.rtabs button + button { background: #7d7d7d; }
.all { height: 12px; padding: 4px 2px 0; font-size: 5px; font-weight: 700; text-decoration: underline; border-bottom: 1px solid #ccc; color: #333; }
.log { padding: 0 1px 0 2px; flex: 1; }
.log > div { height: 16px; }
.log p { display: flex; align-items: center; gap: 2px; height: 8px; }
.log time { margin-left: auto; font-size: 4px; color: #777; }
.h0 { color: #b2b82a; }
.mark { align-self: flex-end; width: 136px; display: flex; flex-direction: column; color: #b9b9b9; margin-bottom: 1px; }
.mark b { font-size: 6px; line-height: 9px; font-weight: 400; }
.mark span { font-size: 5px; white-space: nowrap; }
.compose { height: 21px; border-top: 1px solid #e3e3e3; display: flex; align-items: center; padding: 0 3px 0 4px; }
.compose input { flex: 1; font-style: italic; }
.compose input::placeholder { color: #444; opacity: 1; }
.rtask { height: 13px; background: #232324; display: flex; color: #fff; }
.rapps { display: grid; grid-template-columns: repeat(9, 1fr); width: 147px; }
.rapps span { display: flex; align-items: center; justify-content: center; }
.rapps .run { border-bottom: 1px solid #9ab; }
.rapps .active { background: #d9474b; box-shadow: inset 0 0 3px #999; }
.rtray { margin-left: auto; display: flex; align-items: center; gap: 2px; padding-right: 6px; }
.rtray time { font-size: 4px; line-height: 5px; text-align: center; margin: 0 4px 0 2px; }
.cursor { position: absolute; left: 643px; top: 36px; }

.popup { position: absolute; right: 121px; top: 157px; bottom: 136px; width: 213px; background: #0a0a0b; display: flex; flex-direction: column; }
.pwin { height: 25px; background: #060609; display: flex; align-items: center; justify-content: flex-end; gap: 8px; padding-right: 5px; color: #a4a4ad; }
.paddr { height: 26px; background: #060609; display: flex; align-items: center; padding: 0 4px 0 6px; color: #a4a4ad; gap: 7px; }
.paddr .url { width: 98px; overflow: hidden; white-space: nowrap; margin: 0 -1px 0 2px; flex: 1; }
.paddr .bar { margin: 0 -2px; }
.paddr .bar + svg { margin-left: 3px; }
.popup h2 { font-size: 10px; font-weight: 700; text-align: center; line-height: 22px; height: 25px; margin: 0 2px; border-bottom: 2px solid #242527; }
.feed { flex: 1; display: flex; flex-direction: column; padding: 3px 10px 3px 7px; position: relative; }
.feed::after { content: ""; position: absolute; right: 2px; top: 20px; bottom: 0; width: 2px; background: #59595c; }
.reply { display: flex; align-items: center; gap: 2px; color: #66676b; padding-left: 6px; height: 13px; white-space: nowrap; font-size: 8px; }
.list { flex: 1; display: flex; flex-direction: column; justify-content: space-between; }
.list p { height: 13px; display: flex; align-items: center; padding-left: 6px; color: #d4d4d6; }
.list b { color: #c4134a; font-weight: 700; }
.list i { font-weight: 700; }
.list .mod { padding-left: 5px; }
.mod svg { margin-right: 3px; }
.list .mod b { color: #f3d5dc; }
.list .sep { color: #53e52a; padding: 0; gap: 8px; font-weight: 700; }
.sep::before, .sep::after { content: ""; flex: 1; height: 1px; background: #45b32a; }
.pem { display: flex; justify-content: space-between; padding: 10px 22px 0 47px; height: 30px; }
.pfoot { height: 40px; display: flex; align-items: center; padding: 0 1px 10px 7px; }
.pfield { position: relative; width: 69px; height: 31px; border: 1px solid #36373a; border-radius: 3px; display: flex; align-items: center; padding-left: 10px; flex: none; }
.pfield label { width: 40px; margin-left: 11px; font-size: 9px; line-height: 11px; color: #77787b; }
.pfield input { width: 0; }
.psm { position: absolute; right: 10px; }
.pd { margin: 0 2px 0 11px; }
.pg { margin-left: 15px; }
.pb { margin: 0 12px 0 18px; color: #77787b; }
.pfoot .go { width: 32px; flex: 0 0 32px; overflow: hidden; justify-content: flex-start; padding-left: 8px; border-radius: 3px 0 0 3px; font-weight: 500; }
.tip { position: absolute; left: 4px; bottom: 39px; background: #fff; color: #111; font-weight: 600; border-radius: 3px; width: 40px; height: 20px; line-height: 20px; text-align: center; }
.tip::after { content: ""; position: absolute; left: 16px; top: 20px; border: 4px solid transparent; border-top-color: #fff; border-bottom: 0; }

.taskbar { position: relative; height: 27px; display: flex; background: linear-gradient(90deg, #1c1d24 0, #24323a 21%, #2e3c42 46%, #2a3c42 52%, #1d1f20 60%); font-family: "Noto Sans", sans-serif; }
.start { width: 32px; }
.find { width: 229px; height: 27px; background: #f1f1f2; color: #333; display: flex; align-items: center; gap: 7px; padding-left: 8px; }
.find svg { transform: scaleX(-1); }
.find input { flex: 1; font-size: 10px; }
.find input::placeholder { color: #444; opacity: 1; }
.apps { display: grid; grid-template-columns: repeat(10, 1fr); width: 328px; }
.apps button { border-bottom: 2px solid transparent; }
.apps .run { border-color: #6fa9d6; }
.apps .active { background: #5a6a6e; }
.apps .opera { color: #a01643; }
.apps .anydeskw span { background: #ef3a3c; padding: 3px; }
.tray { margin-left: auto; display: flex; align-items: center; gap: 6px; padding-right: 16px; color: #ddd; }
.tray time { font: 8px/12px Roboto, sans-serif; text-align: center; margin-right: 5px; }
</style>
